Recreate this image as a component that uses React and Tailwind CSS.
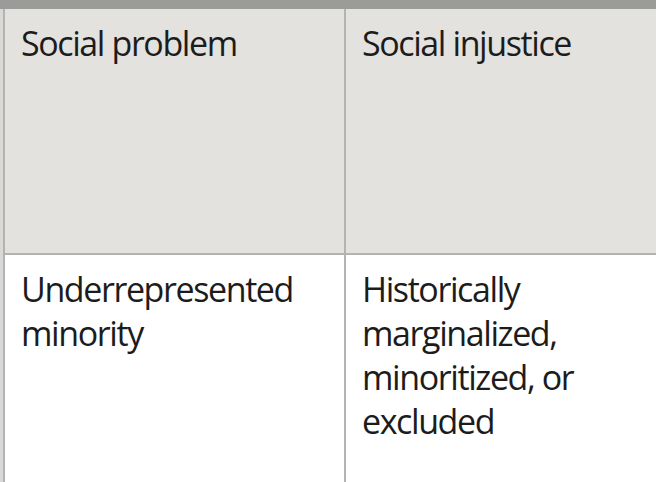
import React from "react";

const rows = [
	["Underrepresented minority", "Historically marginalized, minoritized, or excluded"],
];

export default function App() {
	return (
		<div className="w-[656px] h-[482px] overflow-hidden bg-white" style={{ fontFamily: "'Open Sans', 'Noto Sans', sans-serif" }}>
			<div className="h-[9px] bg-[#9b9b9a]" />
			<div className="flex">
				<div className="w-[3px] shrink-0 bg-[#d9d9d7]" />
				<div className="grid grid-cols-[341px_400px] border-l-2 border-[#b3b3b1] text-[#1c1c1c] text-[34px] leading-[44px] tracking-[-1.4px]">
					<div className="h-[246px] bg-[#e3e2df] border-r-2 border-b-2 border-[#b3b3b1] pl-[16px] pt-[12px]">
						Social problem
					</div>
					<div className="h-[246px] bg-[#e3e2df] border-b-2 border-[#b3b3b1] pl-[16px] pt-[12px]">
						Social injustice
					</div>
					{rows.map(([a, b]) => (
						<React.Fragment key={a}>
							<div className="h-[240px] border-r-2 border-[#b3b3b1] pl-[16px] pt-[12px] pr-4">{a}</div>
							<div className="h-[240px] pl-[16px] pt-[12px] pr-[150px]">{b}</div>
						</React.Fragment>
					))}
				</div>
			</div>
		</div>
	);
}
